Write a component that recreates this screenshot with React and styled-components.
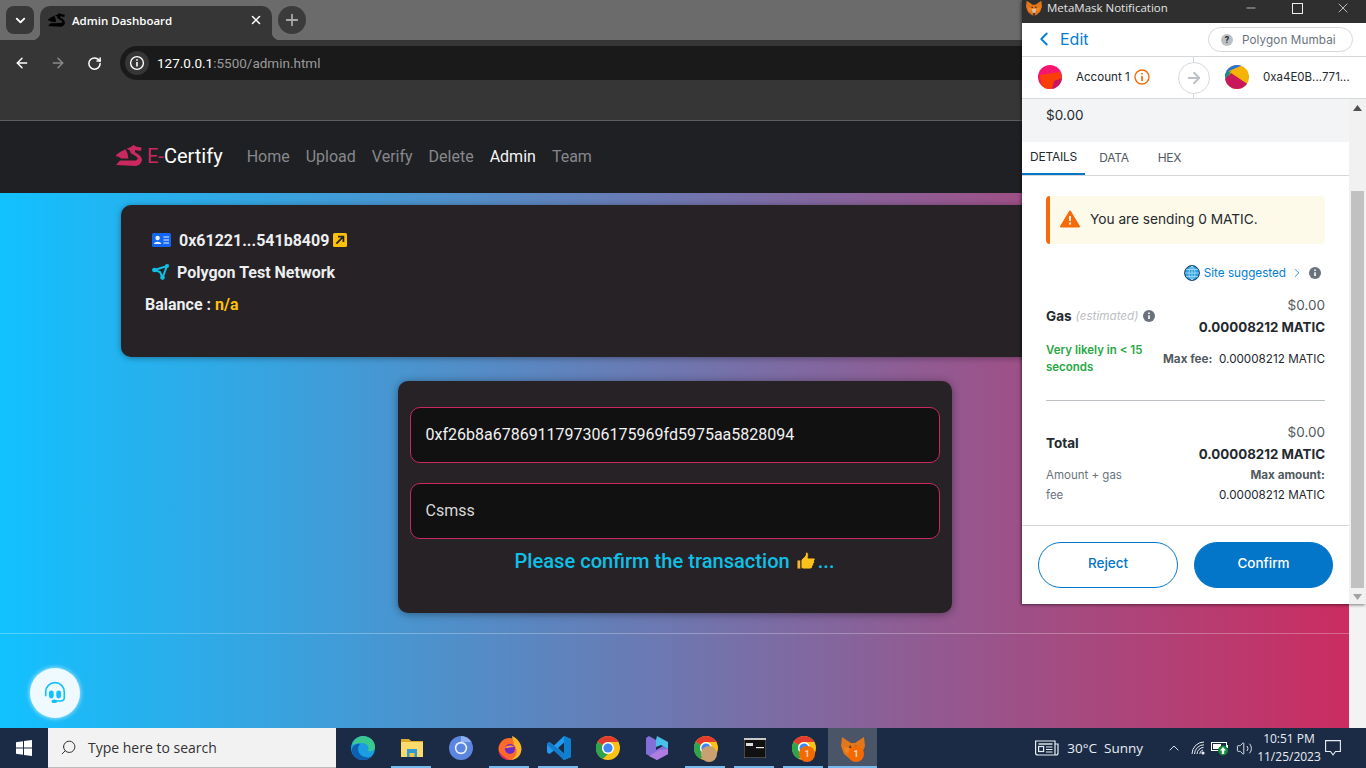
import React from "react";
import styled, { createGlobalStyle } from "styled-components";
import { ArrowLeft, ArrowRight, RotateCw, ChevronDown, ChevronLeft, ChevronRight, ChevronUp, Plus, X, Minus, Volume2, Search } from "lucide-react";

const Global = createGlobalStyle`
  html, body { margin: 0; padding: 0; width: 1366px; height: 768px; overflow: hidden; }
  * { box-sizing: border-box; }
  body { font-family: Roboto, "Liberation Sans", sans-serif; }
`;

const Desktop = styled.div`
  position: relative; width: 1366px; height: 768px; display: flex; flex-direction: column; overflow: hidden; background: #1b2b45;
`;
const TabStrip = styled.div`
  height: 40px; flex: none; background: #6b6b6b; display: flex; align-items: flex-start; padding: 6px 0 0 6px;
`;
const TabMenu = styled.div`
  width: 28px; height: 28px; border-radius: 8px; background: #383838; color: #fff; display: flex; align-items: center; justify-content: center; margin-right: 6px;
`;
const Tab = styled.div`
  position: relative; width: 232px; height: 34px; background: #363636; border-radius: 10px 10px 0 0; display: flex; align-items: center; padding: 0 9px 6px 8px; color: #fff; margin-right: 6px;
  &::before, &::after { content: ""; position: absolute; bottom: 0; width: 8px; height: 8px; }
  &::before { left: -8px; background: radial-gradient(circle at 0 0, transparent 8px, #363636 8.5px); }
  &::after { right: -8px; background: radial-gradient(circle at 100% 0, transparent 8px, #363636 8.5px); }
`;
const TabTitle = styled.span`
  margin-left: 7px; flex: 1; font: 600 11.5px "Open Sans", sans-serif;
`;
const NewTab = styled.div`
  width: 28px; height: 28px; border-radius: 50%; background: #3b3b3b; color: #a8a8a8; display: flex; align-items: center; justify-content: center;
`;
const Toolbar = styled.div`
  height: 81px; flex: none; background: #363636; border-bottom: 1px solid #5f5f5f; display: flex; align-items: flex-start; padding: 6px 0 0 14px;
`;
const NavIcon = styled.div`
  width: 16px; height: 34px; margin-right: 20px; display: flex; align-items: center; justify-content: center; color: ${p => p.$dim ? "#8a8a8a" : "#fff"};
`;
const Omni = styled.div`
  width: 1000px; height: 34px; margin-left: -2px; background: #1a1a1a; border-radius: 17px; display: flex; align-items: center; padding-left: 5px; font: 400 13.5px Roboto, sans-serif; color: #9a9a9a;
`;
const OmniInfo = styled.div`
  width: 24px; height: 24px; border-radius: 50%; background: #363636; display: flex; align-items: center; justify-content: center; margin-right: 8px;
`;
const Host = styled.span` color: #fff; `;
const NavBar = styled.nav`
  height: 72px; flex: none; background: #1f2023; display: flex; align-items: center; padding: 0 0 2px 116px;
`;
const Brand = styled.div`
  display: flex; align-items: center; font: 400 20px Roboto, sans-serif; color: #fff; margin-right: 24px;
`;
const BrandAccent = styled.span` color: #c9295f; margin-left: 5px; `;
const NavLink = styled.a`
  font: 400 16px Roboto, sans-serif; color: ${p => p.$active ? "#f4f4f4" : "#86888c"}; margin-right: 16px;
`;
const Page = styled.div`
  position: relative; flex: 1; min-height: 0; display: flex;
`;
const Gradient = styled.main`
  flex: 1; background: linear-gradient(to right, #12c1ff 0%, #cb2c60 100%); padding-top: 12px; display: flex; flex-direction: column;
`;
const PageScroll = styled.div` width: 17px; flex: none; background: #f3f3f3; `;
const InfoCard = styled.section`
  height: 152px; margin: 0 121px; padding: 19px 24px 0; background: #262226; border-radius: 10px; box-shadow: 0 1px 6px rgba(0,0,0,.35); color: #eceef0; font: 700 16px Roboto, sans-serif;
`;
const InfoRow = styled.div`
  height: 32px; display: flex; align-items: center; padding-left: ${p => p.$indent || 0}px;
`;
const RowIcon = styled.span`
  display: inline-flex; margin: 0 ${p => p.$gap}px 0 ${p => p.$before || 0}px;
`;
const Amber = styled.span` color: #ffc107; margin-left: 4px; `;
const FormCard = styled.section`
  width: 554px; height: 232px; margin: 24px auto 0; padding: 26px 12px 0; background: #262226; border-radius: 10px; box-shadow: 0 1px 8px rgba(0,0,0,.4);
`;
const Field = styled.div`
  height: 56px; background: #111112; border: 1px solid #c9295f; border-radius: 10px; display: flex; align-items: center; padding: 0 0 2px 15px; margin-bottom: 20px; font: 400 16px Roboto, sans-serif; color: ${p => p.$color};
`;
const Pending = styled.div`
  margin-top: -10px; height: 24px; display: flex; align-items: center; justify-content: center; color: #0fc0e6; font: 500 20.1px Roboto, sans-serif;
`;
const Rule = styled.hr`
  margin: 20px 0 0; border: 0; border-top: 1px solid rgba(255,255,255,.28);
`;
const Support = styled.div`
  position: absolute; left: 30px; bottom: 10px; width: 50px; height: 50px; border-radius: 50%; background: #eefaff; box-shadow: 0 0 5px rgba(255,255,255,.8); display: flex; align-items: center; justify-content: center;
`;
const Taskbar = styled.footer`
  height: 40px; flex: none; background: #1b2b45; display: flex; align-items: stretch; position: relative;
`;
const StartBtn = styled.div` width: 48px; display: flex; align-items: center; justify-content: center; `;
const SearchBox = styled.div`
  width: 288px; background: #f2f2f2; display: flex; align-items: center; padding-left: 12px; color: #333; font: 400 14px "Open Sans", sans-serif; margin-right: 2px; border-bottom: 1px solid #bbb;
`;
const SearchText = styled.span` margin-left: 11px; `;
const TaskItem = styled.div`
  width: 49px; display: flex; align-items: center; justify-content: center; position: relative; background: ${p => p.$active ? "#4a5567" : "transparent"};
  &::after { content: ""; display: ${p => p.$run ? "block" : "none"}; position: absolute; bottom: 0; left: ${p => p.$active ? 0 : 4}px; right: ${p => p.$active ? 0 : 5}px; height: 2px; background: #76b9ed; }
`;
const Badge = styled.span`
  position: absolute; right: 13px; bottom: 6px; width: 16px; height: 16px; border-radius: 50%; background: ${p => p.$bg || "#f56a00"}; color: #ffd9b8; font: 700 9px Roboto, sans-serif; display: flex; align-items: center; justify-content: center;
`;
const Tray = styled.div`
  flex: 1; display: flex; align-items: center; justify-content: flex-end; color: #e8edf3; font: 400 14px "Open Sans", sans-serif; padding-right: 25px;
`;
const Weather = styled.span` margin: 0 23px 0 8px; font-size: 13.5px; white-space: pre; `;
const TrayIcon = styled.span` display: inline-flex; margin-right: ${p => p.$gap}px; `;
const Clock = styled.div`
  width: 70px; margin: 0 1px 0 1px; font-size: 12px; text-align: center; line-height: 18px; white-space: nowrap;
`;
/* MetaMask window */
const Popup = styled.aside`
  position: absolute; top: 0; left: 1022px; width: 344px; height: 604px; background: #fff; display: flex; flex-direction: column; box-shadow: -1px 1px 3px rgba(0,0,0,.5); font-family: Inter, sans-serif; color: #24292e; font-size: 12px;
`;
const TitleBar = styled.div`
  height: 23px; flex: none; background: #2f2f2f; color: #e4e4e4; display: flex; align-items: flex-start; padding: 0 0 0 4px; font: 400 11.5px/15px "Open Sans", sans-serif; overflow: hidden;
`;
const TitleText = styled.span` margin-left: 5px; flex: 1; `;
const WinBtn = styled.span` display: inline-flex; width: 46px; height: 16px; align-items: center; justify-content: center; color: #eee; `;
const MMHeader = styled.div`
  height: 34px; flex: none; border-bottom: 1px solid #d6d9dc; display: flex; align-items: center; justify-content: space-between; padding: 0 13px 0 14px; color: #037dd6; font-size: 16px;
`;
const EditLink = styled.div` display: flex; align-items: center; margin-top: -2px; `;
const EditText = styled.span` margin-left: 5px; `;
const NetPill = styled.div`
  width: 145px; height: 25px; border: 1px solid #d6d9dc; border-radius: 13px; display: flex; align-items: center; padding-left: 12px; color: #6a737d; font-size: 11.7px; letter-spacing: .1px;
`;
const NetQ = styled.span`
  width: 12px; height: 12px; border-radius: 50%; background: #bbc0c5; color: #24292e; font: 700 9px Roboto, sans-serif; display: flex; align-items: center; justify-content: center; margin-right: 9px;
`;
const AccountRow = styled.div`
  height: 42px; flex: none; border-bottom: 1px solid #d6d9dc; display: flex; align-items: center; position: relative; padding: 0 0 2px 16px;
`;
const AccountName = styled.span` margin: 0 1px 0 14px; font-size: 11.6px; width: 57px; white-space: nowrap; `;
const ArrowWrap = styled.div`
  position: absolute; left: 156px; top: 5px; width: 32px; height: 32px; border-radius: 50%; background: #fff; border: 1px solid #d6d9dc; color: #bbc0c5; display: flex; align-items: center; justify-content: center;
`;
const ArrowStem = styled.span`
  position: absolute; left: 171px; top: 0; height: 41px; width: 1px; background: #d6d9dc;
`;
const TargetWrap = styled.div` position: absolute; left: 203px; top: 8px; display: flex; align-items: center; `;
const TargetText = styled.span` margin-left: 14px; font-size: 11.5px; white-space: nowrap; `;
const ScrollWrap = styled.div` flex: 1; min-height: 0; display: flex; `;
const Body = styled.div` flex: 1; min-width: 0; display: flex; flex-direction: column; `;
const Fiat = styled.div`
  height: 43px; flex: none; background: #f2f4f6; padding: 7px 0 0 24px; font-size: 13.5px; line-height: 18px;
`;
const Tabs = styled.div`
  height: 34px; flex: none; border-bottom: 1px solid #d6d9dc; display: flex;  font-size: 12px; color: #535a61;
`;
const TabItem = styled.div`
  height: 33px; width: ${p => p.$w}px; display: flex; align-items: center; justify-content: center; padding-bottom: 3px; border-bottom: ${p => p.$on ? "2px solid #0376c9" : "0"}; color: ${p => p.$on ? "#24292e" : "#535a61"}; letter-spacing: -.25px;
`;
const Details = styled.div` flex: 1; min-height: 0; padding: 20px 3px 0 24px; `;
const Warn = styled.div`
  width: 279px; height: 48px; background: #fefae9; border-left: 4px solid #f66a0a; border-radius: 4px; display: flex; align-items: center; padding: 0 0 2px 10px; font-size: 13.7px;
`;
const WarnText = styled.span` margin-left: 10px; `;
const SiteRow = styled.div`
  width: 279px; height: 18px; margin-top: 20px; padding-right: 4px; display: flex; align-items: center; justify-content: flex-end; color: #037dd6; font-size: 11.7px;
`;
const SiteText = styled.span` margin: 0 4px 0 4px; `;
const SiteInfo = styled.span` display: inline-flex; margin-left: 5px; `;
const AmountRow = styled.div`
  width: 279px; display: flex; justify-content: space-between; align-items: ${p => p.$align || "center"}; height: ${p => p.$h}px; margin-top: ${p => p.$mt || 0}px;
`;
const AmountLabel = styled.span` font-weight: 700; font-size: 13.5px; display: flex; align-items: center; color: #24292e; `;
const Muted = styled.i` font-weight: 400; font-size: 11.7px; color: #bbc0c5; margin: 0 4px 0 4px; `;
const AmountCol = styled.div` text-align: right; line-height: 22px; `;
const Fine = styled.div` color: #535a61; font-size: 13.5px; `;
const Strong = styled.div` font-weight: 700; font-size: 13.3px; `;
const Likely = styled.div` width: 110px; color: #28a745; font-weight: 600; font-size: 11.5px; line-height: 17px; `;
const MaxFee = styled.div` color: #24292e; font-size: 11.7px; white-space: pre; `;
const MaxKey = styled.b` color: #535a61; font-weight: 700; `;
const Divider = styled.div` width: 279px; height: 1px; background: #bbc0c5; margin: 24px 0 0; `;
const SubText = styled.div` width: 85px; color: #6a737d; font-size: 11.5px; line-height: 20px; `;
const MaxCol = styled.div` text-align: right; font-size: 11.7px; line-height: 20px; color: #24292e; `;
const Footer = styled.div`
  height: 79px; flex: none; border-top: 1px solid #d6d9dc; display: flex; gap: 16px; padding: 16px 16px 0;
`;
const Btn = styled.div`
  flex: none; width: ${p => p.$w}px; height: 46px; padding-bottom: 5px; border-radius: 23px; border: 1px solid #0376c9; background: ${p => p.$fill ? "#0376c9" : "#fff"}; color: ${p => p.$fill ? "#fff" : "#0376c9"}; display: flex; align-items: center; justify-content: center; font-size: 13.5px; font-weight: 500;
`;
const Scrollbar = styled.div`
  width: 17px; flex: none; background: #f1f1f1; display: flex; flex-direction: column; align-items: center;
`;
const ScrollArrow = styled.div` height: 17px; display: flex; align-items: center; justify-content: center; flex: none; margin-top: ${p => p.$end ? "auto" : 0}; `;
const Thumb = styled.div` width: 13px; height: 397px; margin-top: 75px; background: #c1c1c1; flex: none; `;

const DragonLogo = ({ w = 26, color = "#c9295f" }) => (
  <svg width={w} height={w * 0.81} viewBox="0 0 26 21" fill={color}>
    <path d="M17.5 0 L14 2.6 L10.5 3.6 L13.8 5.4 L14.8 8.2 L20 11.2 L22 13.4 L20 15.4 L4 15.6 L0 20 L20 21 Q25 20 26 15 Q25.6 10.4 19 7.2 L19 5 L25 6 L25.5 2.4 L20.5 1.8 Z" />
    <path d="M0.5 9.6 L5 6.4 L9.5 4.2 L11.4 8 L12.4 13.6 L5 13.4 L2.2 11.6 L0.2 11.8 Z" />
  </svg>
);

const Fox = ({ s = 16 }) => (
  <svg width={s} height={s} viewBox="0 0 24 24">
    <path d="M1 1 L10 7 L14 7 L23 1 L24 10 L21 18 L15 23 L9 23 L3 18 L0 10 Z" fill="#e2761b" />
    <path d="M3 11 L10 13 L8 17 L4 16 Z M21 11 L14 13 L16 17 L20 16 Z" fill="#f6851b" />
    <path d="M9 13 L15 13 L14 19 L10 19 Z" fill="#d7c1b3" />
    <path d="M9 9 L11 12 L8 12 Z M15 9 L16 12 L13 12 Z" fill="#5e3315" />
    <path d="M10 20 L14 20 L13 23 L11 23 Z" fill="#233447" />
  </svg>
);

const ChromeLogo = ({ s = 24 }) => (
  <svg width={s} height={s} viewBox="0 0 24 24">
    <circle cx="12" cy="12" r="12" fill="#fbc116" />
    <path d="M12 0 A12 12 0 0 1 22.4 6 L12 6 A6 6 0 0 0 6.8 9 L1.6 6 A12 12 0 0 1 12 0 Z" fill="#e33b2e" />
    <path d="M1.6 6 L6.8 9 A6 6 0 0 0 12 18 L6.8 23 A12 12 0 0 1 1.6 6 Z" fill="#2fa44f" />
    <circle cx="12" cy="12" r="6" fill="#fff" />
    <circle cx="12" cy="12" r="4.6" fill="#4285f4" />
  </svg>
);
const EdgeLogo = () => (
  <svg width="24" height="24" viewBox="0 0 24 24">
    <circle cx="12" cy="12" r="12" fill="#1b9de2" />
    <path d="M1 9 C3 2 9 0 12 0 C19 0 24 5 24 11 C24 15 20 16 17 15 C19 11 16 7 11 7 C6 7 3 8 1 9 Z" fill="#39c98f" />
    <path d="M10 24 C4 23 0 18 1 12 C3 8 8 7 9 8 C6 11 6 19 14 21 C18 22 20 21 21 20 C18 23 14 25 10 24 Z" fill="#0d5fb0" />
  </svg>
);
const FolderLogo = () => (
  <svg width="22" height="20" viewBox="0 0 22 20">
    <path d="M0 1 H8 L10 3 H22 V5 H0 Z" fill="#e0a82e" />
    <rect y="4" width="22" height="15" fill="#fbd96a" />
    <rect x="6" y="11" width="10" height="8" fill="#2a9bd8" />
    <rect x="8.5" y="15" width="5" height="4" fill="#f8c33f" />
  </svg>
);
const ChromiumLogo = () => (
  <svg width="24" height="24" viewBox="0 0 24 24">
    <circle cx="12" cy="12" r="12" fill="#5b86e0" />
    <path d="M12 0 A12 12 0 0 1 22.4 6 L12 6 Z" fill="#8fb0ef" />
    <circle cx="12" cy="12" r="6.2" fill="#e8efff" />
    <circle cx="12" cy="12" r="4.6" fill="#5b86e0" />
  </svg>
);
const FirefoxLogo = () => (
  <svg width="24" height="24" viewBox="0 0 24 24">
    <circle cx="11.5" cy="13" r="11" fill="#ff6a2b" />
    <path d="M14 0 C21 3 25 10 23 16 C22 21 17 24 12 24 C20 21 20 13 16 9 C16 5 14 3 14 0 Z" fill="#ffb52e" />
    <path d="M1 15 C1 21 7 24 12 24 C7 22 3 19 1 15 Z" fill="#e0266f" />
    <circle cx="12" cy="13" r="5" fill="#6a2bc8" />
    <path d="M7 12 C9 9 14 9 16 11 C13 11 10 12 7 12 Z" fill="#ff9b3d" />
  </svg>
);
const VSCodeLogo = () => (
  <svg width="24" height="24" viewBox="0 0 24 24">
    <path d="M17 0 L24 3 V21 L17 24 L7 14.5 L2.5 18 L0 16.5 V7.5 L2.5 6 L7 9.5 Z M17 6.5 L11 12 L17 17.5 Z" fill="#1f9cf0" />
    <path d="M17 0 L24 3 V21 L17 24 Z" fill="#0f7fd0" />
    <path d="M0 7.5 L2.5 6 L17 17.5 V24 L0 9 Z" fill="#0f6fb8" opacity=".7" />
  </svg>
);
const CopilotLogo = () => (
  <svg width="22" height="24" viewBox="0 0 22 24">
    <path d="M3 0 L10 4 V14 L17 10 L22 13 V18 L11 24 L0 18 V2 Z" fill="#8270d8" />
    <path d="M11 0 L22 6 V13 L15 9 L10 11 V4 Z" fill="#48c0e8" />
    <path d="M3 20 L13 14 L22 13 V18 L11 24 Z" fill="#b07ce0" />
  </svg>
);
const CmdLogo = () => (
  <svg width="22" height="20" viewBox="0 0 22 20">
    <rect width="22" height="20" fill="#111" stroke="#9a9a9a" strokeWidth=".8" />
    <rect width="22" height="2" fill="#c8c8c8" />
    <rect x="2" y="5" width="7" height="3" fill="#ddd" />
    <rect x="12" y="9" width="8" height="1.2" fill="#eee" />
  </svg>
);
const WinLogo = () => (
  <svg width="16" height="16" viewBox="0 0 16 16" fill="#fff">
    <path d="M0 2.2 L7 1.2 V7.6 H0 Z M8 1 L16 0 V7.6 H8 Z M0 8.5 H7 V14.8 L0 13.8 Z M8 8.5 H16 V16 L8 15 Z" />
  </svg>
);
const Avatar1 = () => (
  <svg width="24" height="24" viewBox="0 0 24 24">
    <clipPath id="av1"><circle cx="12" cy="12" r="12" /></clipPath>
    <g clipPath="url(#av1)">
      <rect width="24" height="24" fill="#f5176f" />
      <path d="M2 10 L22 7 L24 14 L12 24 L4 24 Z" fill="#fa3e05" />
      <path d="M14 24 L24 24 L24 13 L16 16 Z" fill="#c8185f" />
    </g>
  </svg>
);
const Avatar2 = () => (
  <svg width="24" height="24" viewBox="0 0 24 24">
    <clipPath id="av2"><circle cx="12" cy="12" r="12" /></clipPath>
    <g clipPath="url(#av2)">
      <rect width="24" height="24" fill="#f4b400" />
      <path d="M0 0 H18 L4 6 L0 14 Z" fill="#2a6fd6" />
      <path d="M0 8 L6 6 L1 16 Z" fill="#12937b" />
      <path d="M6 8 L24 20 V24 H0 V14 Z" fill="#c9175c" />
    </g>
  </svg>
);
const OrangeInfo = () => (
  <svg width="16" height="16" viewBox="0 0 16 16" fill="none" stroke="#f66a0a" strokeWidth="1.4">
    <circle cx="8" cy="8" r="7" />
    <path d="M8 7 V12 M8 4 V5.5" strokeWidth="1.7" />
  </svg>
);
const GrayInfo = () => (
  <svg width="12" height="12" viewBox="0 0 12 12">
    <circle cx="6" cy="6" r="6" fill="#6a737d" />
    <path d="M6 5.2 V9 M6 2.6 V4" stroke="#fff" strokeWidth="1.6" />
  </svg>
);
const WarnTri = () => (
  <svg width="20" height="18" viewBox="0 0 20 18">
    <path d="M10 1.5 L19 16.5 H1 Z" fill="#f66a0a" stroke="#f66a0a" strokeWidth="2" strokeLinejoin="round" />
    <path d="M10 6 V11 M10 12.6 V14.4" stroke="#fff" strokeWidth="1.8" />
  </svg>
);
const Globe = () => (
  <svg width="16" height="16" viewBox="0 0 16 16" fill="none">
    <circle cx="8" cy="8" r="7.4" fill="#2f9fe0" stroke="#12344f" strokeWidth="1" />
    <path d="M1 8 H15 M2 4.5 H14 M2 11.5 H14 M8 1 V15 M8 1 C4 4 4 12 8 15 M8 1 C12 4 12 12 8 15" stroke="#bfe6ff" strokeWidth=".7" />
  </svg>
);
const IdIcon = () => (
  <svg width="19" height="14" viewBox="0 0 19 14">
    <rect width="19" height="14" rx="1.6" fill="#1266f1" />
    <circle cx="5.6" cy="5" r="2.2" fill="#e8f0ff" />
    <path d="M2 11 C2 8 9.2 8 9.2 11 Z" fill="#e8f0ff" />
    <path d="M11.4 4 H17 M11.4 7 H17 M11.4 10 H17" stroke="#e8f0ff" strokeWidth="1.1" />
  </svg>
);
const LinkIcon = () => (
  <svg width="14" height="14" viewBox="0 0 14 14">
    <rect width="14" height="14" rx="1.6" fill="#ffc107" />
    <path d="M3.4 10.6 L9.8 4.2 M5 3.6 H10.4 V9" fill="none" stroke="#262226" strokeWidth="1.8" />
  </svg>
);
const PolyIcon = () => (
  <svg width="17" height="16" viewBox="0 0 17 16" fill="none" stroke="#0fc0e6" strokeWidth="2">
    <path d="M2.5 6 L15 2 L10.5 13.5 L8 8 Z" />
    <circle cx="2.5" cy="6" r="2.3" fill="#0fc0e6" stroke="none" />
    <circle cx="15" cy="2" r="2" fill="#0fc0e6" stroke="none" />
    <circle cx="10.5" cy="13.5" r="2.3" fill="#0fc0e6" stroke="none" />
  </svg>
);
const Headset = () => (
  <svg width="26" height="26" viewBox="0 0 24 24" fill="none" stroke="#12bfff" strokeWidth="1.5">
    <path d="M3.4 15 V11 a8.6 8.6 0 0 1 17.2 0 V16 q0 3.4 -3.4 3.4 H13" />
    <rect x="6.4" y="9.6" width="4.4" height="7.4" rx="2.2" fill="#12bfff" stroke="none" />
    <rect x="13.2" y="9.6" width="4.4" height="7.4" rx="2.2" fill="#12bfff" stroke="none" />
    <ellipse cx="11.4" cy="19.6" rx="2.6" ry="1.7" fill="#12bfff" stroke="none" />
  </svg>
);
const Thumbs = () => (
  <svg width="20" height="20" viewBox="0 0 20 20" style={{ margin: "0 2px 0 6px" }}>
    <path d="M1 9 H5 V18 H1 Z" fill="#f7b733" stroke="#222" strokeWidth=".9" />
    <path d="M5 9 L9 5 L10 1 C12 1 13 3 12 7 H18 C19.5 7 19.5 9.5 18 10 C19 11 18.5 12.5 17.5 12.5 C18 14 17 15 16.5 15 C17 16.5 15.5 18 14 18 H7 L5 17 Z" fill="#fcc21b" stroke="#222" strokeWidth=".9" />
  </svg>
);
const WifiIcon = () => (
  <svg width="14" height="14" viewBox="0 0 14 14" fill="none" stroke="#e8edf3" strokeWidth="1">
    <path d="M1 13 A12 12 0 0 1 13 1 M3.5 13 A9.5 9.5 0 0 1 13 3.8 M6 13 A7 7 0 0 1 12.5 6.4 M8.7 13 A4.4 4.4 0 0 1 12 9" />
    <circle cx="12" cy="12" r="1.6" fill="#e8edf3" stroke="none" />
  </svg>
);
const BatteryIcon = () => (
  <svg width="19" height="16" viewBox="0 0 19 16">
    <rect x=".5" y="2.5" width="15" height="8" fill="#1b2b45" stroke="#fff" />
    <rect x="2" y="4" width="8" height="5" fill="#fff" />
    <rect x="15.5" y="5" width="1.5" height="3" fill="#fff" />
    <circle cx="12" cy="10.5" r="5" fill="#118a3a" />
    <path d="M12 7 L15 10.5 H13.2 V14 H10.8 V10.5 H9 Z" fill="#fff" />
  </svg>
);
const NewsIcon = () => (
  <svg width="24" height="16" viewBox="0 0 24 16" fill="none" stroke="#e8edf3" strokeWidth="1.2">
    <path d="M.6 1 H20 V15 H3 Q.6 15 .6 13 Z M20 4 H23 V13 Q23 15 21 15 H20" />
    <path d="M3.5 4 H17.5" strokeWidth="1.4" />
    <rect x="3.6" y="6.5" width="5" height="5" />
    <path d="M11 7 H17.5 M11 9.5 H17.5 M11 12 H17.5" />
  </svg>
);
const NotifIcon = () => (
  <svg width="16" height="16" viewBox="0 0 16 16" fill="none" stroke="#e8edf3" strokeWidth="1.1">
    <path d="M.6 .6 H15.4 V11.5 H10.5 L8 14.8 L5.5 11.5 H.6 Z" />
  </svg>
);
const Chevron = ({ up }) => (
  <svg width="9" height="6" viewBox="0 0 9 6" fill={up ? "#505050" : "#a3a3a3"} style={{ transform: up ? "none" : "rotate(180deg)" }}>
    <path d="M4.5 0 L9 6 H0 Z" />
  </svg>
);
const TinyI = () => (
  <svg width="16" height="16" viewBox="0 0 16 16" fill="none" stroke="#fff" strokeWidth="1.4">
    <circle cx="8" cy="8" r="6.4" />
    <path d="M8 7 V11.6 M8 4.2 V5.8" strokeWidth="1.6" />
  </svg>
);

export default function App() {
  return (
    <Desktop>
      <Global />
      <TabStrip>
        <TabMenu><ChevronDown size={15} strokeWidth={3} /></TabMenu>
        <Tab>
          <DragonLogo w={17} color="#000" />
          <TabTitle>Admin Dashboard</TabTitle>
          <X size={14} strokeWidth={2.6} />
        </Tab>
        <NewTab><Plus size={18} strokeWidth={2.4} /></NewTab>
      </TabStrip>
      <Toolbar>
        <NavIcon><ArrowLeft size={16} strokeWidth={2.2} /></NavIcon>
        <NavIcon $dim><ArrowRight size={16} strokeWidth={2.2} /></NavIcon>
        <NavIcon><RotateCw size={15} strokeWidth={2.4} /></NavIcon>
        <Omni>
          <OmniInfo><TinyI /></OmniInfo>
          <span><Host>127.0.0.1</Host>:5500/admin.html</span>
        </Omni>
      </Toolbar>
      <NavBar>
        <Brand>
          <DragonLogo />
          <BrandAccent>E-</BrandAccent>Certify
        </Brand>
        <NavLink>Home</NavLink>
        <NavLink>Upload</NavLink>
        <NavLink>Verify</NavLink>
        <NavLink>Delete</NavLink>
        <NavLink $active>Admin</NavLink>
        <NavLink>Team</NavLink>
      </NavBar>
      <Page>
        <Gradient>
          <InfoCard>
            <InfoRow $indent={7}>
              <RowIcon $gap={8}><IdIcon /></RowIcon>
              0x61221...541b8409
              <RowIcon $gap={0} $before={4}><LinkIcon /></RowIcon>
            </InfoRow>
            <InfoRow $indent={7}>
              <RowIcon $gap={8}><PolyIcon /></RowIcon>
              Polygon Test Network
            </InfoRow>
            <InfoRow>Balance : <Amber>n/a</Amber></InfoRow>
          </InfoCard>
          <FormCard>
            <Field $color="#f2f2f2">0xf26b8a6786911797306175969fd5975aa5828094</Field>
            <Field $color="#d8d8d8">Csmss</Field>
            <Pending>Please confirm the transaction <Thumbs />...</Pending>
          </FormCard>
          <Rule />
        </Gradient>
        <PageScroll />
        <Support><Headset /></Support>
      </Page>
      <Taskbar>
        <StartBtn><WinLogo /></StartBtn>
        <SearchBox>
          <Search size={17} strokeWidth={1.4} style={{ transform: "scaleX(-1)" }} />
          <SearchText>Type here to search</SearchText>
        </SearchBox>
        <TaskItem><EdgeLogo /></TaskItem>
        <TaskItem $run><FolderLogo /></TaskItem>
        <TaskItem><ChromiumLogo /></TaskItem>
        <TaskItem $run><FirefoxLogo /></TaskItem>
        <TaskItem $run><VSCodeLogo /></TaskItem>
        <TaskItem><ChromeLogo /></TaskItem>
        <TaskItem><CopilotLogo /></TaskItem>
        <TaskItem $run><ChromeLogo /><Badge $bg="#c9a070" /></TaskItem>
        <TaskItem $run><CmdLogo /></TaskItem>
        <TaskItem $run><ChromeLogo /><Badge>1</Badge></TaskItem>
        <TaskItem $run $active><Fox s={24} /><Badge>1</Badge></TaskItem>
        <Tray>
          <NewsIcon />
          <Weather>30°C  Sunny</Weather>
          <TrayIcon $gap={9}><ChevronUp size={16} strokeWidth={1.4} /></TrayIcon>
          <TrayIcon $gap={6}><WifiIcon /></TrayIcon>
          <TrayIcon $gap={6}><BatteryIcon /></TrayIcon>
          <TrayIcon $gap={0}><Volume2 size={17} strokeWidth={1.3} /></TrayIcon>
          <Clock>10:51 PM<br />11/25/2023</Clock>
          <NotifIcon />
        </Tray>
      </Taskbar>
      <Popup>
        <TitleBar>
          <Fox />
          <TitleText>MetaMask Notification</TitleText>
          <WinBtn><Minus size={14} strokeWidth={1.2} /></WinBtn>
          <WinBtn><svg width="11" height="11" viewBox="0 0 11 11" fill="none" stroke="#eee"><rect x=".5" y=".5" width="10" height="10" /></svg></WinBtn>
          <WinBtn><X size={16} strokeWidth={1.1} /></WinBtn>
        </TitleBar>
        <MMHeader>
          <EditLink><ChevronLeft size={22} strokeWidth={2} style={{ marginLeft: -3 }} /><EditText>Edit</EditText></EditLink>
          <NetPill><NetQ>?</NetQ>Polygon Mumbai</NetPill>
        </MMHeader>
        <AccountRow>
          <Avatar1 />
          <AccountName>Account 1</AccountName>
          <OrangeInfo />
          <ArrowStem />
          <ArrowWrap><ArrowRight size={18} strokeWidth={2.4} /></ArrowWrap>
          <TargetWrap><Avatar2 /><TargetText>0xa4E0B...771...</TargetText></TargetWrap>
        </AccountRow>
        <ScrollWrap>
          <Body>
            <Fiat>$0.00</Fiat>
            <Tabs>
              <TabItem $on $w={63}>DETAILS</TabItem>
              <TabItem $w={58}>DATA</TabItem>
              <TabItem $w={53}>HEX</TabItem>
            </Tabs>
            <Details>
              <Warn><WarnTri /><WarnText>You are sending 0 MATIC.</WarnText></Warn>
              <SiteRow>
                <Globe />
                <SiteText>Site suggested</SiteText>
                <ChevronRight size={14} strokeWidth={1.4} />
                <SiteInfo><GrayInfo /></SiteInfo>
              </SiteRow>
              <AmountRow $h={44} $mt={12}>
                <AmountLabel>Gas <Muted>(estimated)</Muted><GrayInfo /></AmountLabel>
                <AmountCol><Fine>$0.00</Fine><Strong>0.00008212 MATIC</Strong></AmountCol>
              </AmountRow>
              <AmountRow $h={34} $mt={4}>
                <Likely>Very likely in &lt; 15 seconds</Likely>
                <MaxFee><MaxKey>Max fee:</MaxKey>  0.00008212 MATIC</MaxFee>
              </AmountRow>
              <Divider />
              <AmountRow $h={44} $mt={20}>
                <AmountLabel>Total</AmountLabel>
                <AmountCol><Fine>$0.00</Fine><Strong>0.00008212 MATIC</Strong></AmountCol>
              </AmountRow>
              <AmountRow $h={40} $align="flex-start">
                <SubText>Amount + gas fee</SubText>
                <MaxCol><MaxKey>Max amount:</MaxKey><br />0.00008212 MATIC</MaxCol>
              </AmountRow>
            </Details>
            <Footer>
              <Btn $w={140}>Reject</Btn>
              <Btn $w={139} $fill>Confirm</Btn>
            </Footer>
          </Body>
          <Scrollbar>
            <ScrollArrow><Chevron up /></ScrollArrow>
            <Thumb />
            <ScrollArrow $end><Chevron /></ScrollArrow>
          </Scrollbar>
        </ScrollWrap>
      </Popup>
    </Desktop>
  );
}
